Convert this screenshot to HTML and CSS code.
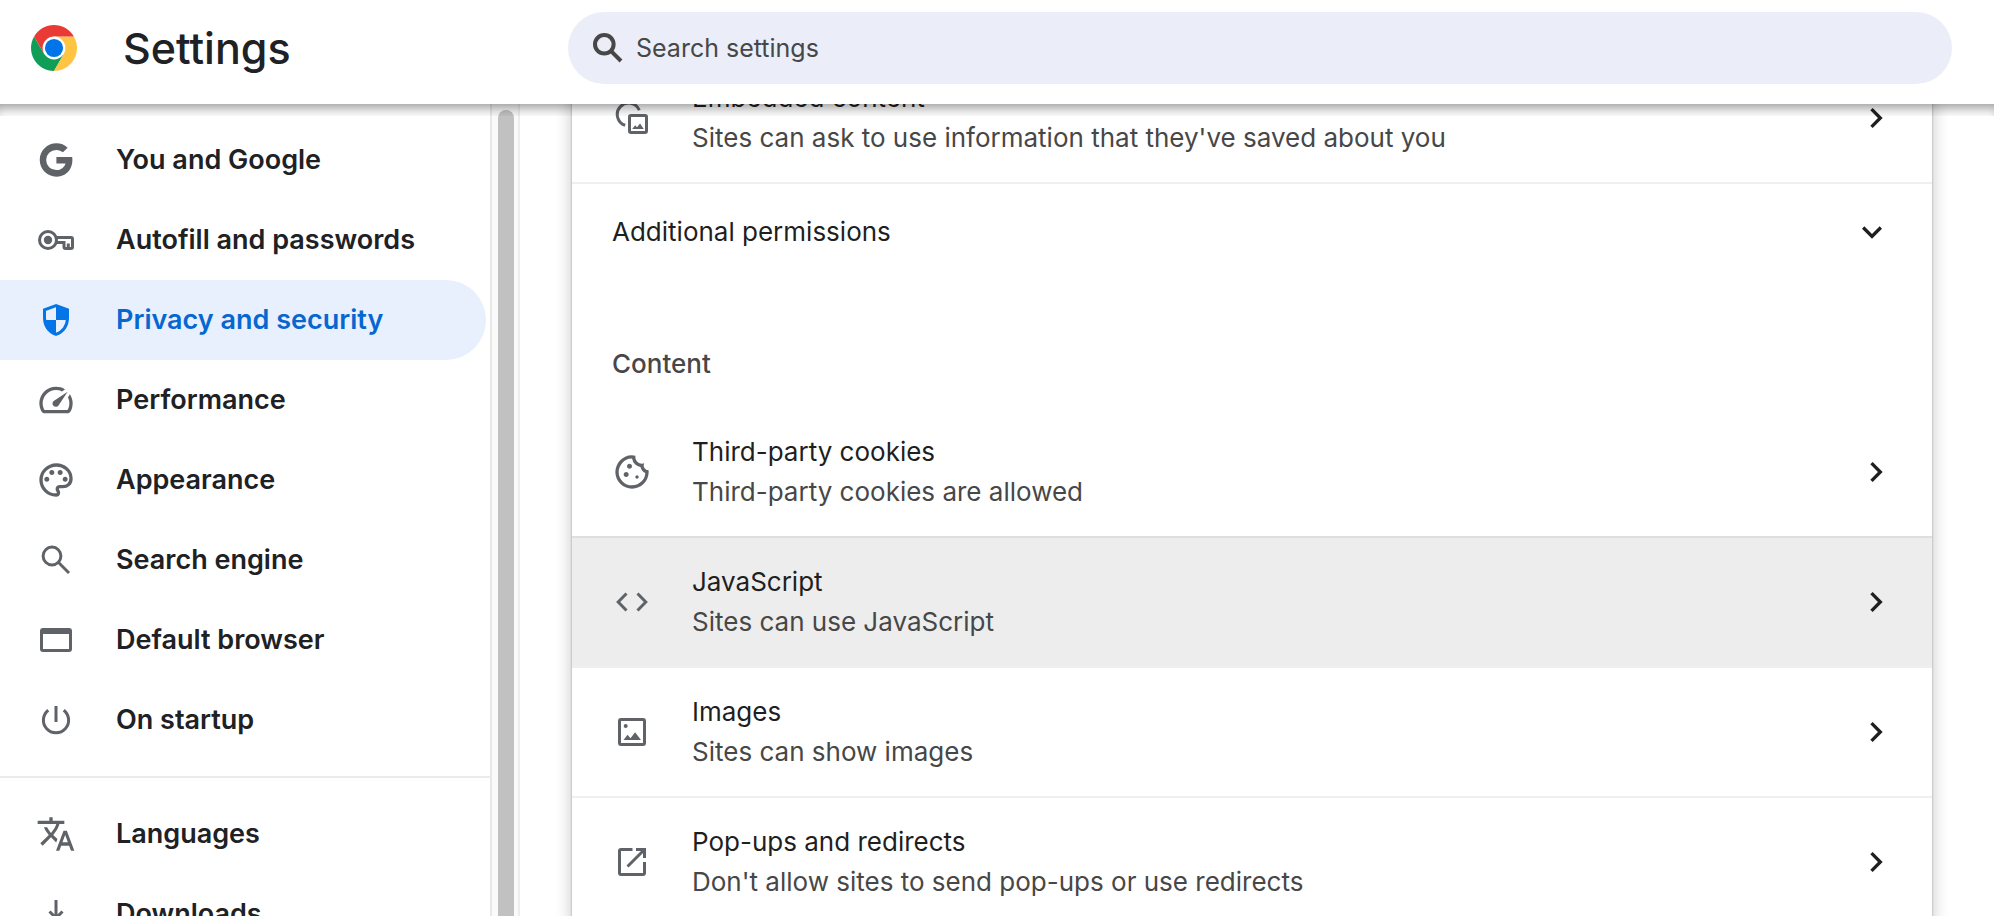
FILE: index.html
```html
<!DOCTYPE html>
<html lang="en">
<head>
    <meta charset="UTF-8">
    <meta name="viewport" content="width=device-width, initial-scale=1.0">
    <title>Settings</title>
    <link rel="stylesheet" href="styles.css">
</head>
<body>

<!-- Toolbar -->
<header class="toolbar">
    <div class="brand">
        <svg class="logo" viewBox="-23 -23 46 46">
            <path fill="#0f9d58" d="M-19.9-11.5A23 23 0 0 0 0 23L9.96 5.75H-9.96z"/>
            <path fill="#ffc542" d="M19.9-11.5A23 23 0 0 1 0 23L9.96 5.75 0-11.5z"/>
            <path fill="#ea3a35" d="M-19.9-11.5A23 23 0 0 1 19.9-11.5H0L-9.96 5.75z"/>
            <circle r="11.4" fill="#fff"/>
            <circle r="9.1" fill="#0074e8"/>
        </svg>
        <h1>Settings</h1>
    </div>
    <label class="search" for="search">
        <svg class="icon line" viewBox="0 0 40 40"><circle cx="16.3" cy="16.3" r="9.3"/><path d="M22.6 22.6 33 33"/></svg>
        <input type="text" id="search" placeholder="Search settings">
    </label>
</header>

<div class="page">
    <!-- Left menu -->
    <nav class="sidebar">
        <a href="#people"><svg class="icon" viewBox="0 0 24 24"><path d="M12.245 10.239v3.821h5.445c-.712 2.315-2.647 3.972-5.445 3.972a6.033 6.033 0 1 1 0-12.064c1.498 0 2.866.549 3.921 1.453l2.814-2.814A9.969 9.969 0 0 0 12.245 2C6.721 2 2.243 6.477 2.243 12s4.478 10 10.002 10c8.396 0 10.249-7.85 9.426-11.748z"/></svg>You and Google</a>
        <a href="#autofill"><svg class="icon line" viewBox="0 0 40 40"><circle cx="12" cy="20" r="8.5"/><circle class="solid" cx="12" cy="20" r="4.2"/><path d="M20.2 17.5H35a1.5 1.5 0 0 1 1.5 1.5v8a1.5 1.5 0 0 1-1.5 1.5h-5.5A1.5 1.5 0 0 1 28 27v-4.5h-7.8M32.3 23.5V28"/></svg>Autofill and passwords</a>
        <a href="#privacy" class="selected"><svg class="icon" viewBox="0 0 40 40"><path fill="none" stroke="currentColor" stroke-width="3" d="M20 5.600 8.500 9.800V18c0 7.800 4.800 14.300 11.500 16.400 6.700-2.100 11.500-8.600 11.500-16.400V9.800z"/><path d="M20 5l12 4.500V20H20zM8.500 20H20v15C13.500 33 9 27 8.500 20z"/></svg>Privacy and security</a>
        <a href="#performance"><svg class="icon" viewBox="0 -960 960 960"><path d="M418-340q24 24 62 23.500t56-27.500l224-336-336 224q-27 18-28.500 55t22.500 61Zm62-460q59 0 113.500 16.500T696-734l-76 48q-33-17-68.500-25.500T480-720q-133 0-226.500 93.500T160-400q0 42 11.500 83t32.500 77h552q23-38 33.500-79t10.500-85q0-36-8.500-70T766-540l48-76q30 47 47.500 100T880-400q0 54-13 103t-39 91q-11 21-30 33.500T756-160H204q-23 0-42-12.500T132-206q-26-45-39-91.500T80-400q0-83 31.500-155.500t86-127Q252-737 325-768.500T480-800Z"/></svg>Performance</a>
        <a href="#appearance"><svg class="icon" viewBox="0 -960 960 960"><path fill-rule="evenodd" d="M480-80q-82 0-155-31.500t-127.500-86Q143-252 111.500-325T80-480q0-83 32.500-156t88-127Q256-817 330-848.500T488-880q80 0 151 27.500t124.500 76q53.500 48.500 85 115T880-518q0 115-70 176.500T640-280h-74q-9 0-12.500 5t-3.500 11q0 12 15 34.500t15 51.500q0 50-27.500 74T480-80ZM260-440q26 0 43-17t17-43q0-26-17-43t-43-17q-26 0-43 17t-17 43q0 26 17 43t43 17Zm120-160q26 0 43-17t17-43q0-26-17-43t-43-17q-26 0-43 17t-17 43q0 26 17 43t43 17Zm200 0q26 0 43-17t17-43q0-26-17-43t-43-17q-26 0-43 17t-17 43q0 26 17 43t43 17Zm120 160q26 0 43-17t17-43q0-26-17-43t-43-17q-26 0-43 17t-17 43q0 26 17 43t43 17ZM480-160q9 0 14.500-5t5.500-13q0-14-15-33t-15-57q0-42 29-67t71-25h70q66 0 113-38.500T800-518q0-121-92.500-201.500T488-800q-136 0-232 93t-96 227q0 133 93.500 226.500T480-160Z"/></svg>Appearance</a>
        <a href="#searchEngine"><svg class="icon line" viewBox="0 0 40 40"><circle cx="16" cy="16" r="8.9"/><path d="M22.3 22.3 33 33"/></svg>Search engine</a>
        <a href="#defaultBrowser"><svg class="icon line" viewBox="0 0 40 40"><rect x="5.5" y="9.5" width="29" height="21" rx="1.5"/><path stroke-width="5" d="M5 11.500h30"/></svg>Default browser</a>
        <a href="#onStartup"><svg class="icon line" viewBox="0 0 40 40"><path d="M20 6v16M12.300 10.200a12.600 12.600 0 1 0 15.400 0"/></svg>On startup</a>
        <hr>
        <a href="#languages"><svg class="icon" viewBox="0 0 24 24"><path d="M12.870 15.070l-2.540-2.510.03-.03c1.740-1.940 2.980-4.170 3.710-6.530H17V4h-7V2H8v2H1v1.990h11.170C11.500 7.920 10.440 9.750 9 11.350 8.070 10.320 7.300 9.190 6.690 8h-2c.73 1.630 1.730 3.170 2.980 4.560l-5.090 5.020L4 19l5-5 3.110 3.110.76-2.040zM18.500 10h-2L12 22h2l1.120-3h4.750L21 22h2l-4.500-12zm-2.620 7l1.620-4.330L19.120 17h-3.240z"/></svg>Languages</a>
        <a href="#downloads"><svg class="icon line" viewBox="0 0 40 40"><path d="M20 6v19M13.500 17.500l6.500 6.500 6.500-6.500M7.500 26v6.500h25V26"/></svg>Downloads</a>
    </nav>
    <div class="scrollbar"><div class="thumb"></div></div>

    <!-- Site settings -->
    <main>
        <div class="card">
            <a class="row" href="#embeddedContent">
                <svg class="icon line" viewBox="0 0 40 40"><path d="M27.300 12.300A11.400 11.400 0 1 0 13.200 27.300"/><rect x="17.5" y="17.5" width="17" height="17" rx="1.5"/><path class="solid" d="M20.200 31l3-3.700 1.800 2 3-3.700 3.800 5.400z"/></svg>
                <span class="text"><span class="title">Embedded content</span><span class="sub">Sites can ask to use information that they've saved about you</span></span>
                <svg class="icon arrow" viewBox="0 0 24 24"><path d="M10 6 8.590 7.410 13.170 12l-4.580 4.590L10 18l6-6z"/></svg>
            </a>
            <button class="expand" type="button">
                <span class="title">Additional permissions</span>
                <svg class="icon arrow" viewBox="0 0 24 24"><path d="M16.590 8.590 12 13.170 7.410 8.590 6 10l6 6 6-6z"/></svg>
            </button>
            <h2>Content</h2>
            <a class="row" href="#cookies">
                <svg class="icon" viewBox="0 -960 960 960"><path d="M480-80q-83 0-156-31.500T197-197q-54-54-85.500-127T80-480q0-75 29-147t81-128.500q52-56.500 125-91T475-881q21 0 43 2t45 7q-9 45 6 85t45 66.500q30 26.500 71.500 36.500t85.500-5q-26 59 7.500 113t99.500 56q1 11 1.500 20.500t.5 20.500q0 82-31.500 154.500t-85.500 127q-54 54.500-127 86T480-80Zm-60-480q25 0 42.500-17.500T480-620q0-25-17.500-42.500T420-680q-25 0-42.500 17.500T360-620q0 25 17.500 42.500T420-560Zm-80 200q25 0 42.500-17.500T400-420q0-25-17.500-42.500T340-480q-25 0-42.500 17.500T280-420q0 25 17.500 42.500T340-360Zm260 40q17 0 28.500-11.500T640-360q0-17-11.500-28.500T600-400q-17 0-28.500 11.500T560-360q0 17 11.500 28.500T600-320ZM480-160q122 0 216.500-84T800-458q-50-22-78.500-60T683-603q-77-11-132-66t-68-132q-80-2-140.500 29t-101 79.500Q201-644 180.500-587T160-480q0 133 93.500 226.500T480-160Z"/></svg>
                <span class="text"><span class="title">Third-party cookies</span><span class="sub">Third-party cookies are allowed</span></span>
                <svg class="icon arrow" viewBox="0 0 24 24"><path d="M10 6 8.590 7.410 13.170 12l-4.580 4.590L10 18l6-6z"/></svg>
            </a>
            <a class="row active" href="#javascript">
                <svg class="icon line" viewBox="0 0 40 40"><path d="M14.500 11.500 6.200 20l8.300 8.500M25.500 11.500l8.300 8.500-8.300 8.500"/></svg>
                <span class="text"><span class="title">JavaScript</span><span class="sub">Sites can use JavaScript</span></span>
                <svg class="icon arrow" viewBox="0 0 24 24"><path d="M10 6 8.590 7.410 13.170 12l-4.580 4.590L10 18l6-6z"/></svg>
            </a>
            <a class="row" href="#images">
                <svg class="icon line" viewBox="0 0 40 40"><rect x="7.5" y="7.5" width="25" height="25" rx="1.5"/><circle class="solid" cx="13.7" cy="14" r="2"/><path class="solid" d="M11.500 28l4-5.300 3 3.600 4.600-6L29 28z"/></svg>
                <span class="text"><span class="title">Images</span><span class="sub">Sites can show images</span></span>
                <svg class="icon arrow" viewBox="0 0 24 24"><path d="M10 6 8.590 7.410 13.170 12l-4.580 4.590L10 18l6-6z"/></svg>
            </a>
            <a class="row" href="#popups">
                <svg class="icon line" viewBox="0 0 40 40"><path d="M20.500 7.500H9A1.500 1.500 0 0 0 7.500 9v22A1.500 1.500 0 0 0 9 32.500h22a1.500 1.500 0 0 0 1.500-1.500V20M24 7.500h8.500V16M15.500 24.500l17-17"/></svg>
                <span class="text"><span class="title">Pop-ups and redirects</span><span class="sub">Don't allow sites to send pop-ups or use redirects</span></span>
                <svg class="icon arrow" viewBox="0 0 24 24"><path d="M10 6 8.590 7.410 13.170 12l-4.580 4.590L10 18l6-6z"/></svg>
            </a>
        </div>
    </main>
</div>

</body>
</html>
```

FILE: styles.css
```css
* {
    box-sizing: border-box;
}
body {
    font-family: Inter, Roboto, sans-serif;
    font-size: 26px;
    line-height: 40px;
    color: #1f1f1f;
    background-color: #fff;
    margin: 0;
    height: 100vh;
    display: flex;
    flex-direction: column;
    overflow: hidden;
}
a {
    color: inherit;
    text-decoration: none;
}
.icon {
    width: 40px;
    height: 40px;
    flex: none;
    fill: currentColor;
    color: #5f6368;
}
.line {
    fill: none;
    stroke: currentColor;
    stroke-width: 3;
}
.solid {
    fill: currentColor;
    stroke: none;
}

/* Toolbar */
.toolbar {
    position: relative;
    z-index: 1;
    display: flex;
    align-items: center;
    flex: none;
    padding: 12px 42px 20px 31px;
    background-color: #fff;
}
.toolbar::after {
    content: "";
    position: absolute;
    left: 0;
    right: 0;
    top: 100%;
    height: 12px;
    box-shadow: inset 0 10px 12px -6px rgba(0, 0, 0, 0.4);
}
.brand {
    display: flex;
    align-items: center;
    gap: 46px;
    width: 537px;
}
.logo {
    width: 46px;
    height: 46px;
}
h1 {
    margin: 0;
    font-size: 43px;
    font-weight: 500;
    color: #202124;
}
.search {
    display: flex;
    align-items: center;
    flex: 1;
    height: 72px;
    padding: 0 20px;
    gap: 8px;
    border-radius: 36px;
    background-color: #ebeef8;
}
.search .icon {
    color: #474747;
    stroke-width: 4;
}
.search input {
    flex: 1;
    padding: 0;
    border: none;
    outline: none;
    background: none;
    font: inherit;
    font-size: 25px;
    color: #1f1f1f;
}
.search input::placeholder {
    color: #474747;
    opacity: 1;
}

/* Left menu */
.page {
    display: flex;
    flex: 1;
    min-height: 0;
}
.sidebar {
    width: 492px;
    flex: none;
    padding-top: 16px;
    border-right: 2px solid #e8e8e8;
    overflow: hidden;
}
.sidebar a {
    display: flex;
    align-items: center;
    gap: 40px;
    height: 80px;
    margin-right: 4px;
    padding-left: 36px;
    border-radius: 0 40px 40px 0;
    font-size: 27px;
    font-weight: 600;
    color: #202124;
}
.sidebar .selected {
    background-color: #e8effd;
    color: #0767d0;
}
.selected .icon {
    color: #0475e6;
}
.sidebar hr {
    margin: 16px 0;
    border: none;
    border-top: 2px solid #ebebeb;
}
.scrollbar {
    width: 28px;
    flex: none;
    padding: 6px 4px 0 6px;
    border-right: 2px solid #ededed;
    background-color: #fafafa;
}
.thumb {
    width: 16px;
    height: 100%;
    border-radius: 8px 8px 0 0;
    background-color: #c1c1c1;
}

/* Site settings */
main {
    flex: 1;
    min-width: 0;
    padding: 0 62px 0 52px;
    overflow: hidden;
}
/* scrolled part way up, under the toolbar */
.card {
    margin-top: -52px;
    box-shadow: 0 0 2px rgba(0, 0, 0, 0.3), 0 4px 16px rgba(0, 0, 0, 0.24);
}
.row {
    display: flex;
    align-items: center;
    gap: 40px;
    padding: 24px 36px 24px 40px;
    border-top: 2px solid #efefef;
}
.text {
    flex: 1;
    display: flex;
    flex-direction: column;
}
.sub {
    color: #474747;
}
.arrow {
    color: #1f1f1f;
}
.expand {
    display: flex;
    align-items: center;
    justify-content: space-between;
    width: 100%;
    height: 98px;
    padding: 0 40px;
    border: none;
    border-top: 2px solid #efefef;
    background: none;
    font: inherit;
    color: inherit;
}
h2 {
    margin: 0;
    padding: 64px 40px 22px;
    font-size: 26px;
    font-weight: 500;
    color: #474747;
}
h2 + .row {
    border-top-color: transparent;
}
.active {
    background-color: #ededed;
    border-top-color: #dedede;
}
```
